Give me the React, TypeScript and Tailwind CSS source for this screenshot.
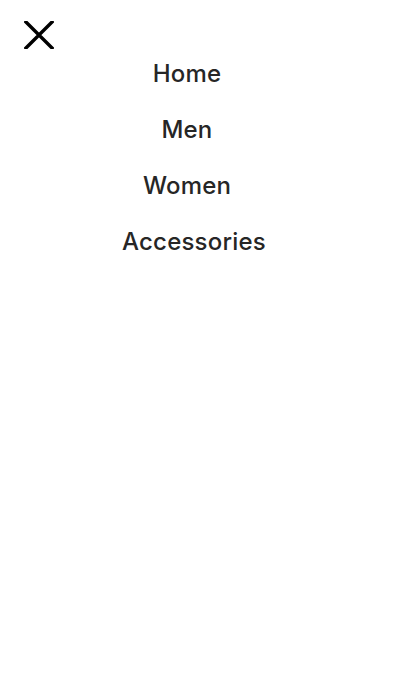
const links = ["Home", "Men", "Women", "Accessories"];

const App = () => {
  return (
    <div className="min-h-screen bg-white font-['Inter',sans-serif]">
      {/* Header */}
      <div className="h-[46px] pl-6 pt-[21px]">
        <button className="block text-black" aria-label="Close menu">
          <svg width="30" height="28" viewBox="0 0 30 28" fill="none">
            <path
              d="M2 1 L28 27 M28 1 L2 27"
              stroke="currentColor"
              strokeWidth="3.4"
              strokeLinecap="square"
            />
          </svg>
        </button>
      </div>

      {/* Links */}
      <nav className="ml-[122px] w-[130px]">
        {links.map((link) => (
          <a
            key={link}
            href="#"
            className="block h-14 whitespace-nowrap text-center text-[24px] font-medium leading-[56px] tracking-[0.2px] text-[#262626]"
          >
            {link}
          </a>
        ))}
      </nav>
    </div>
  );
};

export default App;
